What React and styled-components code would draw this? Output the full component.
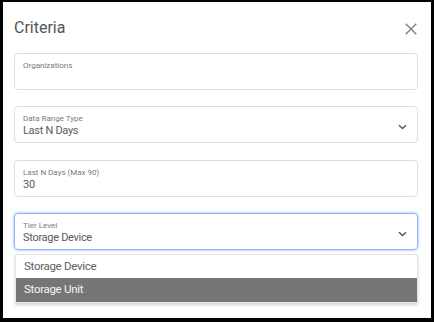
import React from 'react';
import styled, {createGlobalStyle} from "styled-components";

const GlobalStyle = createGlobalStyle`
    html, body {
        margin: 0;
        padding: 0;
        background: #000;
        font-family: Roboto, "Liberation Sans", sans-serif;
    }
`

const Dialog = styled.div`
    box-sizing: border-box;
    margin: 2px 0 0 3px;
    width: 428px;
    height: 316px;
    background: #fff;
    padding: 16px 13px 0 11px;
`

const Header = styled.div`
    display: flex;
    align-items: center;
    justify-content: space-between;
    height: 20px;
    margin-bottom: 15px;
`

const Title = styled.h2`
    margin: 0;
    font-size: 16px;
    line-height: 20px;
    font-weight: 400;
    color: #555;
`

const CloseButton = styled.button`
    border: 0;
    background: none;
    padding: 0;
    margin: 2px 1px 0 0;
    width: 12px;
    height: 12px;
    display: flex;
    align-items: center;
    justify-content: center;
    cursor: pointer;
`

const Form = styled.div`
    display: flex;
    flex-direction: column;
    gap: 16.34px;
`

const FieldWrap = styled.div`
    position: relative;
`

const Field = styled.div`
    box-sizing: border-box;
    height: 37px;
    border: 1px solid ${(props) => props.$focused ? "#8fb6f5" : "#dedede"};
    box-shadow: ${(props) => props.$focused ? "0 0 2px 1px rgba(120,165,240,0.45)" : "none"};
    border-radius: 4px;
    padding: 7px 10px 0 8px;
    display: flex;
    align-items: flex-start;
    justify-content: space-between;
`

const FieldText = styled.div`
    display: flex;
    flex-direction: column;
`

const Label = styled.span`
    font-size: 8px;
    line-height: 10px;
    color: #7a7a7a;
`

const Value = styled.span`
    font-size: 11px;
    line-height: 13px;
    letter-spacing: -0.3px;
    color: #5a5a5a;
`

const Chevron = styled.svg`
    margin-top: 10px;
`

const Menu = styled.ul`
    position: absolute;
    top: calc(100% + 4px);
    left: 1px;
    right: 0;
    margin: 0;
    padding: 0;
    list-style: none;
    background: #fff;
    border: 1px solid #e4e4e4;
    box-shadow: 0 2px 3px rgba(0,0,0,0.18);
`

const Option = styled.li`
    height: 23.5px;
    line-height: 23.5px;
    padding-left: 8px;
    font-size: 11.5px;
    letter-spacing: -0.3px;
    color: ${(props) => props.$active ? "#f4f4f4" : "#5e5e5e"};
    background: ${(props) => props.$active ? "#767676" : "#fff"};
`

function ChevronDown() {
    return (
        <Chevron width="9" height="6" viewBox="0 0 9 6">
            <path d="M1 1.2 L4.5 4.6 L8 1.2" fill="none" stroke="#555" strokeWidth="1.4"/>
        </Chevron>
    )
}

function SelectField({label, value, focused, children}) {
    return (
        <FieldWrap>
            <Field $focused={focused}>
                <FieldText>
                    <Label>{label}</Label>
                    <Value>{value}</Value>
                </FieldText>
                <ChevronDown/>
            </Field>
            {children}
        </FieldWrap>
    )
}

export default function App() {
    return (
        <>
            <GlobalStyle/>
            <Dialog>
                <Header>
                    <Title>Criteria</Title>
                    <CloseButton aria-label="close">
                        <svg width="12" height="12" viewBox="0 0 12 12">
                            <path d="M0.7 0.7 L11.3 11.3 M11.3 0.7 L0.7 11.3" stroke="#7a7a7a" strokeWidth="1.3"/>
                        </svg>
                    </CloseButton>
                </Header>

                <Form>
                    <Field>
                        <FieldText>
                            <Label>Organizations</Label>
                        </FieldText>
                    </Field>

                    <SelectField label="Data Range Type" value="Last N Days"/>

                    <Field>
                        <FieldText>
                            <Label>Last N Days (Max 90)</Label>
                            <Value>30</Value>
                        </FieldText>
                    </Field>

                    <SelectField label="Tier Level" value="Storage Device" focused>
                        <Menu>
                            <Option>Storage Device</Option>
                            <Option $active>Storage Unit</Option>
                        </Menu>
                    </SelectField>
                </Form>
            </Dialog>
        </>
    );
}
